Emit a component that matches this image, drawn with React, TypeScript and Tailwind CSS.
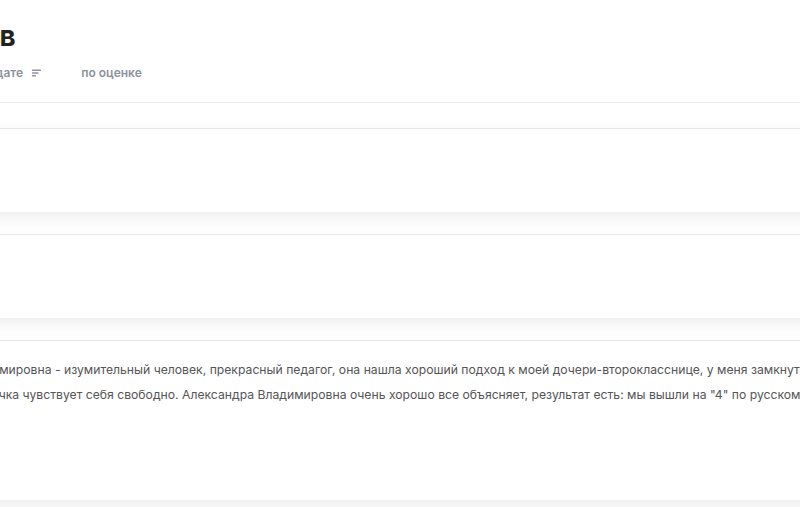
import React from "react";

function SortIcon() {
  return (
    <svg width="9" height="8" viewBox="0 0 9 8" fill="none">
      <rect x="0" y="0.5" width="9" height="1.4" rx="0.5" fill="#8d929d" />
      <rect x="0" y="3.3" width="6.5" height="1.4" rx="0.5" fill="#8d929d" />
      <rect x="0" y="6.1" width="4" height="1.4" rx="0.5" fill="#8d929d" />
    </svg>
  );
}

export default function App() {
  return (
    <div
      className="w-[800px] h-[507px] overflow-hidden bg-white"
      style={{ fontFamily: "Inter, 'Noto Sans', sans-serif" }}
    >
      <div className="-ml-[105px] w-[1100px]">
        <div className="pt-[18px] h-[103px] border-b border-[#ececec] flex flex-col">
          <h1 className="text-[28px] leading-[36px] font-bold text-[#222] tracking-[-0.2px]">
            Отзывов
          </h1>
          <div className="mt-[11px] ml-[83px] flex items-center text-[12px] font-semibold text-[#8d929d] leading-[16px]">
            <span className="flex items-center gap-[9px]">
              по дате
              <SortIcon />
            </span>
            <span className="ml-[40px]">по оценке</span>
          </div>
        </div>
        <div className="flex flex-col gap-[22px] mt-[25px]">
          <div className="h-[84px] bg-white border-t border-[#e6e6e6] shadow-[0_6px_14px_rgba(0,0,0,0.07)]" />
          <div className="h-[84px] bg-white border-t border-[#e6e6e6] shadow-[0_6px_14px_rgba(0,0,0,0.07)]" />
          <div className="h-[160px] bg-white border-t border-[#e6e6e6] shadow-[0_6px_14px_rgba(0,0,0,0.07)] pt-[16px]">
            <div className="-ml-[8px] text-[12.2px] leading-[25px] text-[#555] whitespace-nowrap">
              <div>
                Александра Владимировна - изумительный человек, прекрасный педагог, она нашла хороший подход к моей дочери-второкласснице, у меня замкнутая девочка,
              </div>
              <div className="ml-[51px]">
                а с ней дочка чувствует себя свободно. Александра Владимировна очень хорошо все объясняет, результат есть: мы вышли на "4" по русскому языку.
              </div>
            </div>
          </div>
        </div>
      </div>
    </div>
  );
}
